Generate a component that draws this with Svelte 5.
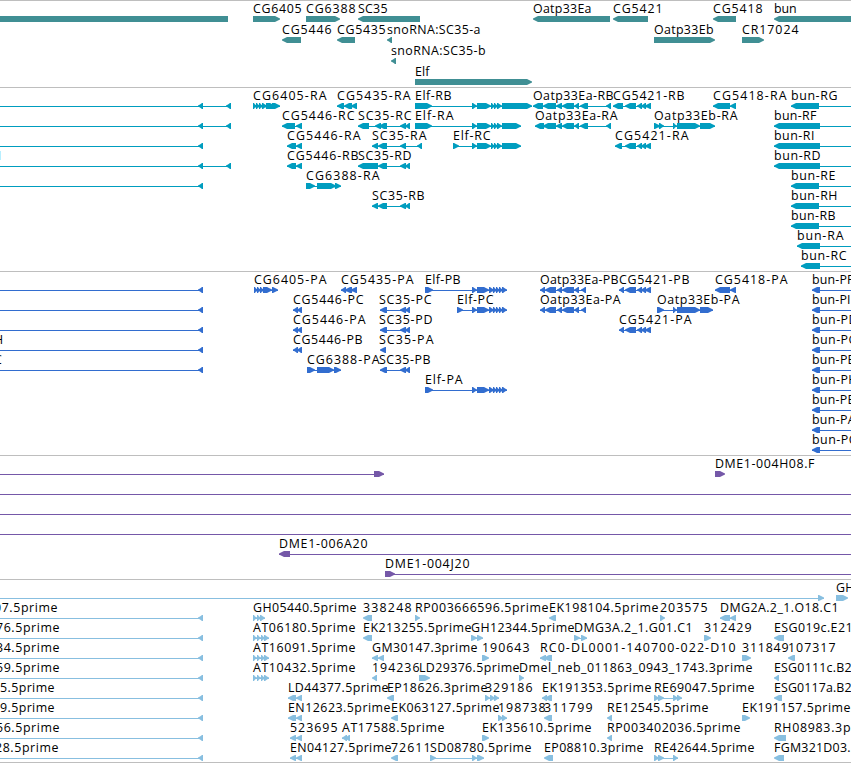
<script>
  // Feature notation: label | label start | label end | strand | blocks | optional line extent
  const leftTail = '|0|0|<|198-203|0-203';
  const leftLong = '|0|0|<|198-203 226-231|0-231';
  const elfEnd = '472-477 477-491 491-495 494-498 497-502';
  const elfP = '472-477 477-489 489-494 493-497 496-500 499-503 502-507';
  const oatpR = '543-556 556-562 562-574 574-579 580-588 606-611';
  const oatpP = '540-545 545-556 557-562 562-574 574-579 581-586';
  const cg5421 = '625-636 637-642 641-646 645-651';
  const at = '253-257 257-261 261-265 264-269';
  const bunEnds = { I: 850, F: 853, E: 854, B: 855, A: 855, C: 856, D: 857, G: 857, H: 857 };
  const bunP = (n) => `bun-P${n}|812|${bunEnds[n]}|<|812-820|812-851`;

  const source = [
    {
      name: 'genes', color: '#408f94', pitch: 21, height: 87,
      rows: [
        ['|0|0|=|0-228', 'CG6405|253|301|>|253-280', 'CG6388|306|355|>|306-340', 'SC35|358|387|<|358-420',
          'Oatp33Ea|533|591|<|533-610', 'CG5421|613|662|<|613-648', 'CG5418|713|762|<|713-736', 'bun|774|796|<|774-860'],
        ['CG5446|282|331|<|282-301', 'CG5435|337|385|<|337-355', 'snoRNA:SC35-a|387|480|<|387-392',
          'Oatp33Eb|654|713|>|654-715', 'CR17024|742|798|>|742-764'],
        ['snoRNA:SC35-b|391|485|<|391-396'],
        ['Elf|415|429|>|415-532']
      ]
    },
    {
      name: 'transcripts', color: '#009dbf', pitch: 20, height: 184,
      rows: [
        [leftLong, 'CG6405-RA|253|326|>|253-257 256-260 259-263 262-267 266-275 272-280', 'CG5435-RA|337|410|<|337-344 344-352 351-357',
          `Elf-RB|415|451|>|415-432 ${elfEnd} 502-532`, `Oatp33Ea-RB|533|613|<|533-543 ${oatpR}`,
          `CG5421-RB|613|684|<|613-623 ${cg5421}`, 'CG5418-RA|713|786|<|713-730 730-736', 'bun-RG|791|837|<|791-819|791-851'],
        [leftLong, 'CG5446-RC|282|354|<|282-295 296-302', 'SC35-RC|358|411|<|358-369 375-381 379-387 400-406 405-410',
          `Elf-RA|415|453|>|415-432 ${elfEnd} 502-521`, `Oatp33Ea-RA|535|617|<|535-544 ${oatpR}`,
          'Oatp33Eb-RA|654|737|>|654-660 659-664 673-677 677-700 700-715', 'bun-RF|774|816|<|774-820|774-851'],
        [leftTail, 'CG5446-RA|287|360|<|287-296 296-302', 'SC35-RA|372|426|<|372-378 378-387 400-406 417-422',
          `Elf-RC|453|490|>|453-459 ${elfEnd} 502-521`, `CG5421-RA|615|688|<|615-622 ${cg5421}`, 'bun-RI|774|814|<|774-820|774-851'],
        [leftLong, 'H|-8|2|=|', 'CG5446-RB|287|358|<|287-296 296-302', 'SC35-RD|358|411|<|358-378 378-387 400-406 405-410',
          'bun-RD|774|820|<|774-820|774-851'],
        [leftTail, 'CG6388-RA|306|379|>|306-315 317-336 335-341', 'bun-RE|791|835|<|791-819|791-851'],
        ['SC35-RB|372|424|<|372-378 378-387 400-406 405-410', 'bun-RH|791|837|<|791-819|791-851'],
        ['bun-RB|791|835|<|791-819|791-851'],
        ['bun-RA|797|843|<|797-820|797-851'],
        ['bun-RC|801|846|<|801-820|801-851']
      ]
    },
    {
      name: 'proteins', color: '#326dcf', pitch: 20, height: 184,
      rows: [
        [leftTail, 'CG6405-PA|254|326|>|254-258 257-261 260-264 263-272 272-278', 'CG5435-PA|341|413|<|341-346 345-352 351-357',
          `Elf-PB|425|460|>|425-433 ${elfP}`, `Oatp33Ea-PB|540|618|<|${oatpP}`, `CG5421-PB|619|689|<|619-624 ${cg5421}`,
          'CG5418-PA|715|787|<|715-730 730-736', bunP('F')],
        [leftTail, 'CG5446-PC|293|363|<|293-298 297-302', 'SC35-PC|379|431|<|380-387 400-406 405-410',
          `Elf-PC|457|493|>|457-463 ${elfP}`, `Oatp33Ea-PA|540|620|<|${oatpP}`,
          'Oatp33Eb-PA|657|739|>|657-664 673-677 677-700 700-713', bunP('I')],
        [leftTail, 'CG5446-PA|293|365|<|293-298 297-302', 'SC35-PD|379|432|<|380-387 400-406 405-410',
          `CG5421-PA|619|691|<|619-624 ${cg5421}`, bunP('D')],
        [leftTail, 'H|-6|4|=|', 'CG5446-PB|293|362|<|293-298 297-302', 'SC35-PA|379|433|<|380-386', bunP('G')],
        [leftTail, 'C|-6|3|=|', 'CG6388-PA|307|379|>|307-315 317-334 334-341', 'SC35-PB|379|430|<|380-387 400-406 405-410', bunP('E')],
        [`Elf-PA|425|462|>|425-433 ${elfP}`, bunP('H')],
        [bunP('B')],
        [bunP('A')],
        [bunP('C')]
      ]
    },
    {
      name: 'clones', color: '#7558a8', pitch: 20, height: 124,
      rows: [
        ['|0|0|>|374-384|0-384', 'DME1-004H08.F|715|814|>|715-725'],
        ['|0|0|=||0-851'],
        ['|0|0|=||0-851'],
        ['|0|0|=||0-851'],
        ['DME1-006A20|279|367|<|279-290|279-851'],
        ['DME1-004J20|385|469|>|385-395|385-851']
      ]
    },
    {
      name: 'ests', color: '#88bfe0', pitch: 20, height: 183,
      rows: [
        ['|0|0|>|818-824|0-824', 'GH|836|854|>|836-848'],
        [leftTail, '07.5prime|-6|57|=|', 'GH05440.5prime|253|356|>|253-257 257-261 260-265', '338248|363|411|<|363-372',
          'RP003666596.5prime|415|548|>|415-420', 'EK198104.5prime|549|658|<|549-556', '203575|660|707|>|660-665',
          'DMG2A.2_1.O18.C1|720|838|<|720-730 730-736'],
        [leftTail, '76.5prime|-4|59|=|', `AT06180.5prime|253|355|>|${at}`, 'EK213255.5prime|363|471|<|363-372',
          'GH12344.5prime|471|574|>|471-477 477-483', 'DMG3A.2_1.G01.C1|574|692|>|574-580 581-587', '312429|704|751|>|704-711',
          'ESG019c.E21|774|852|<|774-784'],
        [leftTail, '34.5prime|-4|59|=|', `AT16091.5prime|253|355|>|${at}`, 'GM30147.3prime|372|477|<|372-378 378-384',
          '190643|482|529|>|482-489', 'RC0-DL0001-140700-022-D10|540|735|<|540-546 544-552', '311849|742|788|>|742-751',
          '107317|788|835|<|788-795'],
        [leftTail, '59.5prime|-4|59|=|', `AT10432.5prime|253|355|>|${at}`, '194236|372|419|<|372-377', 'LD29376.5prime|419|519|>|419-430',
          'Dmel_neb_011863_0943_1743.3prime|519|752|>|519-524', 'ESG0111c.B2|774|851|<|774-779'],
        [leftTail, '5.5prime|0|54|=|', 'LD44377.5prime|288|388|<|288-296 296-302', 'EP18626.3prime|387|487|<|387-394',
          '329186|485|532|>|485-490 490-495 494-499', 'EK191353.5prime|542|651|<|542-547 545-552',
          'RE69047.5prime|654|754|>|654-659 658-664 673-678 677-682', 'ESG0117a.B2|774|851|<|774-782'],
        [leftTail, '9.5prime|0|54|=|', 'EN12623.5prime|288|390|<|288-296 296-302', 'EK063127.5prime|391|499|<|391-398',
          '198738|498|545|>|498-503 502-507', '311799|544|592|<|544-552', 'RE12545.5prime|607|708|<|607-612',
          'EK191157.5prime|742|850|>|742-750'],
        [leftTail, '56.5prime|-4|59|=|', '523695|290|337|<|290-296 296-302', 'AT17588.5prime|342|444|<|342-347 345-350',
          'EK135610.5prime|482|591|>|482-489', 'RP003402036.5prime|607|740|<|607-612', 'RH08983.3p|774|850|<|774-786'],
        [leftTail, '28.5prime|-5|58|=|', 'EN04127.5prime|290|391|<|290-296 296-302', '72611|391|430|<|391-398',
          'SD08780.5prime|430|531|>|430-436 472-477 477-484', 'EP08810.3prime|544|643|<|544-553',
          'RE42644.5prime|654|754|>|654-659 658-664 673-678', 'FGM321D03.|774|850|<|774-784']
      ]
    }
  ];

  // The tip bulges slightly, so short blocks still read as solid arrowheads.
  function blockPath([a, b], strand) {
    const tip = Math.min(6, b - a);
    if (strand === '=') return `M${a} 13H${b}V19H${a}Z`;
    const [back, point, s] = strand === '>' ? [a, b, -1] : [b, a, 1];
    return `M${back} 13H${point + s * (tip - 1)}L${point + s * 2} 14.5L${point} 15.5V16.5L${point + s * 2} 17.5L${point + s * (tip - 1)} 19H${back}Z`;
  }

  function parse(text) {
    const [label, start, end, strand, blockText, extent] = text.split('|');
    const blocks = blockText ? blockText.split(' ').map((s) => s.split('-').map(Number)) : [];
    const line = extent
      ? extent.split('-').map(Number)
      : blocks.length > 1 ? [blocks[0][0], blocks[blocks.length - 1][1]] : null;
    return { label, x: +start, width: end - start + 0.5, line, path: blocks.map((b) => blockPath(b, strand)).join('') };
  }

  const tracks = source.map((t) => ({ ...t, rows: t.rows.map((r) => r.map(parse)) }));
</script>

<main class="browser">
  {#each tracks as track (track.name)}
    <section class="track" style="height: {track.height}px; color: {track.color}">
      {#each track.rows as row}
        <svg class="row" width="851" height={track.pitch}>
          {#each row as f}
            {#if f.line}
              <rect class="glyph" x={f.line[0]} y="16" width={f.line[1] - f.line[0]} height="1" />
            {/if}
            {#if f.path}<path class="glyph" d={f.path} />{/if}
          {/each}
          {#each row as f}
            {#if f.label}
              <text x={f.x} y="10" textLength={f.width}>{f.label}</text>
            {/if}
          {/each}
        </svg>
      {/each}
    </section>
  {/each}
</main>

<style>
  :global(body) {
    margin: 0;
    background: #fff;
  }
  .browser {
    display: flex;
    flex-direction: column;
    box-sizing: border-box;
    width: 851px;
    height: 763px;
    overflow: hidden;
    background: #fff;
    border-bottom: 1px solid #bebebe;
  }
  .track {
    display: flex;
    flex-direction: column;
    flex: none;
    box-sizing: border-box;
    padding-top: 2px;
    border-top: 1px solid #bebebe;
  }
  .row {
    display: block;
    flex: none;
    overflow: visible;
  }
  .glyph {
    fill: currentColor;
  }
  text {
    fill: #000;
    font-family: "Open Sans", "Noto Sans", sans-serif;
    font-size: 12.4px;
  }
</style>
